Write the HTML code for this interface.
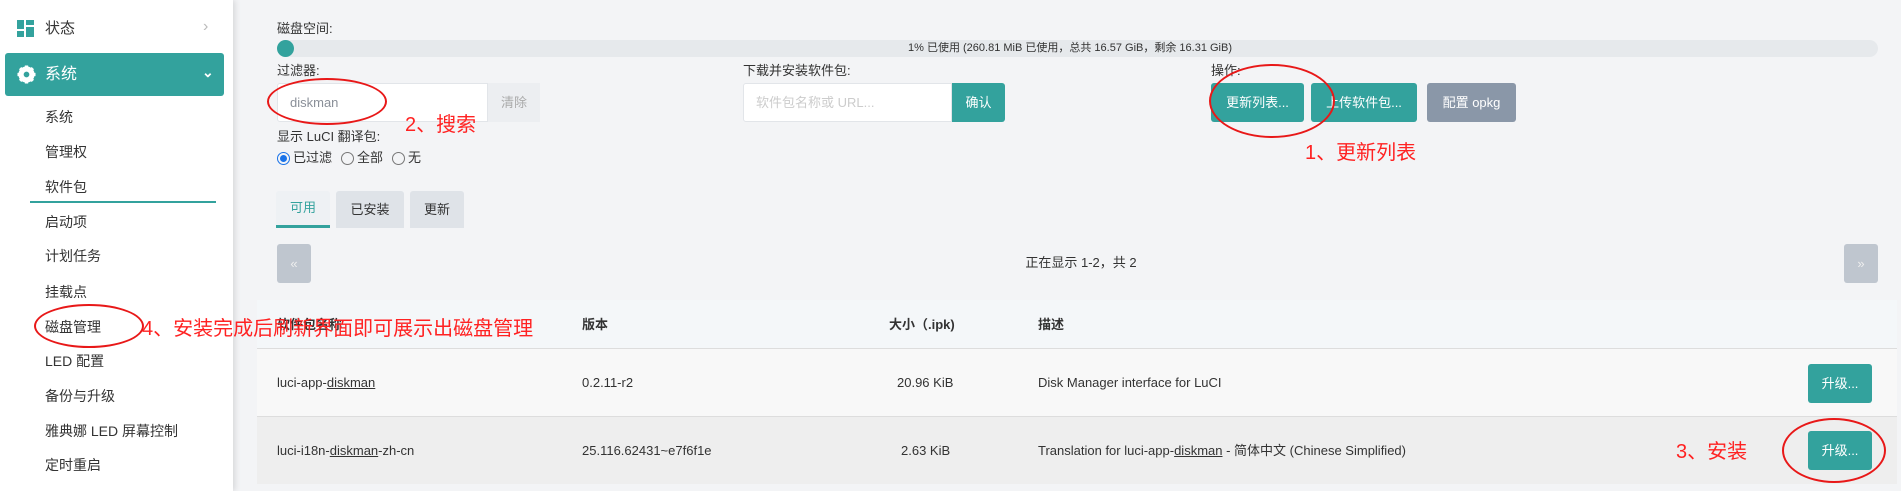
<!DOCTYPE html>
<html><head><meta charset="utf-8"><style>
*{margin:0;padding:0;box-sizing:border-box}
body{width:1901px;height:491px;overflow:hidden;background:#f3f4f6;font-family:"Liberation Sans","Noto Sans CJK SC",sans-serif;color:#333;position:relative;font-size:13px;line-height:16px}
.a{position:absolute;white-space:nowrap}
.side{position:absolute;left:0;top:0;width:233px;height:491px;background:#fff;box-shadow:2px 0 6px rgba(0,0,0,.12)}
.si{position:absolute;left:45px;font-size:14px;color:#333;transform:translateY(-50%)}
.btn{position:absolute;background:#33a29d;color:#fff;border-radius:3px;display:flex;align-items:center;justify-content:center;font-size:13px}
.red{position:absolute;color:#f22;font-size:20px;line-height:24px;white-space:nowrap;transform:translateY(-50%)}
.ell{position:absolute;border:2px solid #e81818;border-radius:50%}
.tab{position:absolute;top:191px;height:37px;background:#dfe3e8;border-radius:3px 3px 0 0;display:flex;align-items:center;justify-content:center;font-size:13px;color:#333}
.u{text-decoration:underline}
</style></head><body>
<div class="side">
 <svg class="a" style="left:17px;top:20px" width="17" height="17" viewBox="0 0 17 17"><rect x="0" y="0" width="7" height="9" fill="#33a29d"/><rect x="9" y="0" width="8" height="5" fill="#33a29d"/><rect x="0" y="11" width="7" height="6" fill="#33a29d"/><rect x="9" y="7" width="8" height="10" fill="#33a29d"/></svg>
 <div class="si" style="top:29px;font-size:15px">状态</div>
 <div class="a" style="left:203px;top:19px;color:#bbb;font-size:16px">›</div>
 <div class="a" style="left:5px;top:53px;width:219px;height:43px;background:#33a29d;border-radius:3px"></div>
 <svg class="a" style="left:17px;top:65px" width="19" height="19" viewBox="0 0 20 20"><circle cx="10" cy="10" r="6.5" fill="none" stroke="#fff" stroke-width="4"/><g stroke="#fff" stroke-width="3.5"><line x1="10" y1="0.5" x2="10" y2="19.5"/><line x1="0.5" y1="10" x2="19.5" y2="10"/><line x1="3.3" y1="3.3" x2="16.7" y2="16.7"/><line x1="16.7" y1="3.3" x2="3.3" y2="16.7"/></g><circle cx="10" cy="10" r="3" fill="#33a29d"/></svg>
 <div class="si" style="top:75px;color:#fff;font-size:16px">系统</div>
 <div class="a" style="left:202px;top:64px;color:#fff;font-size:14px;font-weight:bold">⌄</div>
 <div class="si" style="top:117px">系统</div>
 <div class="si" style="top:152px">管理权</div>
 <div class="si" style="top:187px">软件包</div>
 <div class="a" style="left:30px;top:201px;width:186px;height:2px;background:#33a29d"></div>
 <div class="si" style="top:222px">启动项</div>
 <div class="si" style="top:256px">计划任务</div>
 <div class="si" style="top:292px">挂载点</div>
 <div class="si" style="top:327px">磁盘管理</div>
 <div class="si" style="top:361px">LED 配置</div>
 <div class="si" style="top:396px">备份与升级</div>
 <div class="si" style="top:431px">雅典娜 LED 屏幕控制</div>
 <div class="si" style="top:465px">定时重启</div>
</div>

<div class="a" style="left:277px;top:21px;font-size:13px">磁盘空间:</div>
<div class="a" style="left:277px;top:40px;width:1601px;height:17px;background:#e6e9ec;border-radius:9px"></div>
<div class="a" style="left:277px;top:40px;width:17px;height:17px;background:#33a29d;border-radius:50%"></div>
<div class="a" style="left:908px;top:42px;font-size:11px;line-height:13px;color:#333">1% 已使用 (260.81 MiB 已使用，总共 16.57 GiB，剩余 16.31 GiB)</div>

<div class="a" style="left:277px;top:63px">过滤器:</div>
<div class="a" style="left:277px;top:83px;width:211px;height:39px;background:#fff;border:1px solid #e2e5e9;border-radius:3px 0 0 3px"></div>
<div class="a" style="left:290px;top:95px;color:#8a8f98;font-size:13px">diskman</div>
<div class="a" style="left:488px;top:83px;width:52px;height:39px;background:#eceef1;color:#aaa;display:flex;align-items:center;justify-content:center">清除</div>
<div class="a" style="left:277px;top:129px">显示 LuCI 翻译包:</div>
<div class="a" style="left:277px;top:150px;font-size:13px;display:flex;align-items:center;gap:3px">
 <span style="display:inline-block;width:13px;height:13px;border-radius:50%;border:1px solid #1a73e8;position:relative"><span style="position:absolute;left:2px;top:2px;width:7px;height:7px;border-radius:50%;background:#1a73e8"></span></span>已过滤
 <span style="display:inline-block;width:13px;height:13px;border-radius:50%;border:1px solid #777;margin-left:6px"></span>全部
 <span style="display:inline-block;width:13px;height:13px;border-radius:50%;border:1px solid #777;margin-left:6px"></span>无
</div>

<div class="a" style="left:743px;top:63px">下载并安装软件包:</div>
<div class="a" style="left:743px;top:83px;width:209px;height:39px;background:#fff;border:1px solid #e2e5e9;border-radius:3px 0 0 3px"></div>
<div class="a" style="left:756px;top:95px;color:#ccc">软件包名称或 URL...</div>
<div class="btn" style="left:952px;top:83px;width:53px;height:39px;border-radius:0 3px 3px 0">确认</div>

<div class="a" style="left:1211px;top:63px">操作:</div>
<div class="btn" style="left:1211px;top:83px;width:93px;height:39px">更新列表...</div>
<div class="btn" style="left:1311px;top:83px;width:106px;height:39px">上传软件包...</div>
<div class="btn" style="left:1427px;top:83px;width:89px;height:39px;background:#8a97a8">配置 opkg</div>

<div class="tab" style="left:276px;width:54px;background:#eef1f4;color:#33a29d;border-bottom:3px solid #33a29d">可用</div>
<div class="tab" style="left:336px;width:68px">已安装</div>
<div class="tab" style="left:410px;width:54px">更新</div>

<div class="a" style="left:277px;top:244px;width:34px;height:39px;background:#bfc6cf;border-radius:3px;color:#eee;display:flex;align-items:center;justify-content:center">«</div>
<div class="a" style="left:1081px;top:255px;transform:translateX(-50%)">正在显示 1-2，共 2</div>
<div class="a" style="left:1844px;top:244px;width:34px;height:39px;background:#bfc6cf;border-radius:3px;color:#eee;display:flex;align-items:center;justify-content:center">»</div>

<div class="a" style="left:257px;top:300px;width:1640px;height:49px;background:#f4f7f9;border-bottom:1px solid #ddd"></div>
<div class="a" style="left:257px;top:349px;width:1640px;height:68px;background:#f8f8f8;border-bottom:1px solid #ddd"></div>
<div class="a" style="left:257px;top:417px;width:1640px;height:67px;background:#eeeeee"></div>
<div class="a" style="left:277px;top:317px;font-weight:bold">软件包名称</div>
<div class="a" style="left:582px;top:317px;font-weight:bold">版本</div>
<div class="a" style="left:889px;top:317px;font-weight:bold">大小（.ipk)</div>
<div class="a" style="left:1038px;top:317px;font-weight:bold">描述</div>
<div class="a" style="left:277px;top:375px">luci-app-<span class="u">diskman</span></div>
<div class="a" style="left:582px;top:375px">0.2.11-r2</div>
<div class="a" style="left:897px;top:375px">20.96 KiB</div>
<div class="a" style="left:1038px;top:375px">Disk Manager interface for LuCI</div>
<div class="btn" style="left:1808px;top:364px;width:64px;height:39px">升级...</div>
<div class="a" style="left:277px;top:443px">luci-i18n-<span class="u">diskman</span>-zh-cn</div>
<div class="a" style="left:582px;top:443px">25.116.62431~e7f6f1e</div>
<div class="a" style="left:901px;top:443px">2.63 KiB</div>
<div class="a" style="left:1038px;top:443px">Translation for luci-app-<span class="u">diskman</span> - 简体中文 (Chinese Simplified)</div>
<div class="btn" style="left:1808px;top:431px;width:64px;height:39px">升级...</div>

<div class="ell" style="left:267px;top:78px;width:120px;height:47px"></div>
<div class="ell" style="left:1209px;top:64px;width:126px;height:74px"></div>
<div class="ell" style="left:34px;top:304px;width:110px;height:44px"></div>
<div class="ell" style="left:1782px;top:418px;width:104px;height:65px"></div>
<div class="red" style="left:405px;top:125px">2、搜索</div>
<div class="red" style="left:1305px;top:153px">1、更新列表</div>
<div class="red" style="left:142px;top:329px">4、安装完成后刷新界面即可展示出磁盘管理</div>
<div class="red" style="left:1676px;top:452px">3、安装</div>
</body></html>
